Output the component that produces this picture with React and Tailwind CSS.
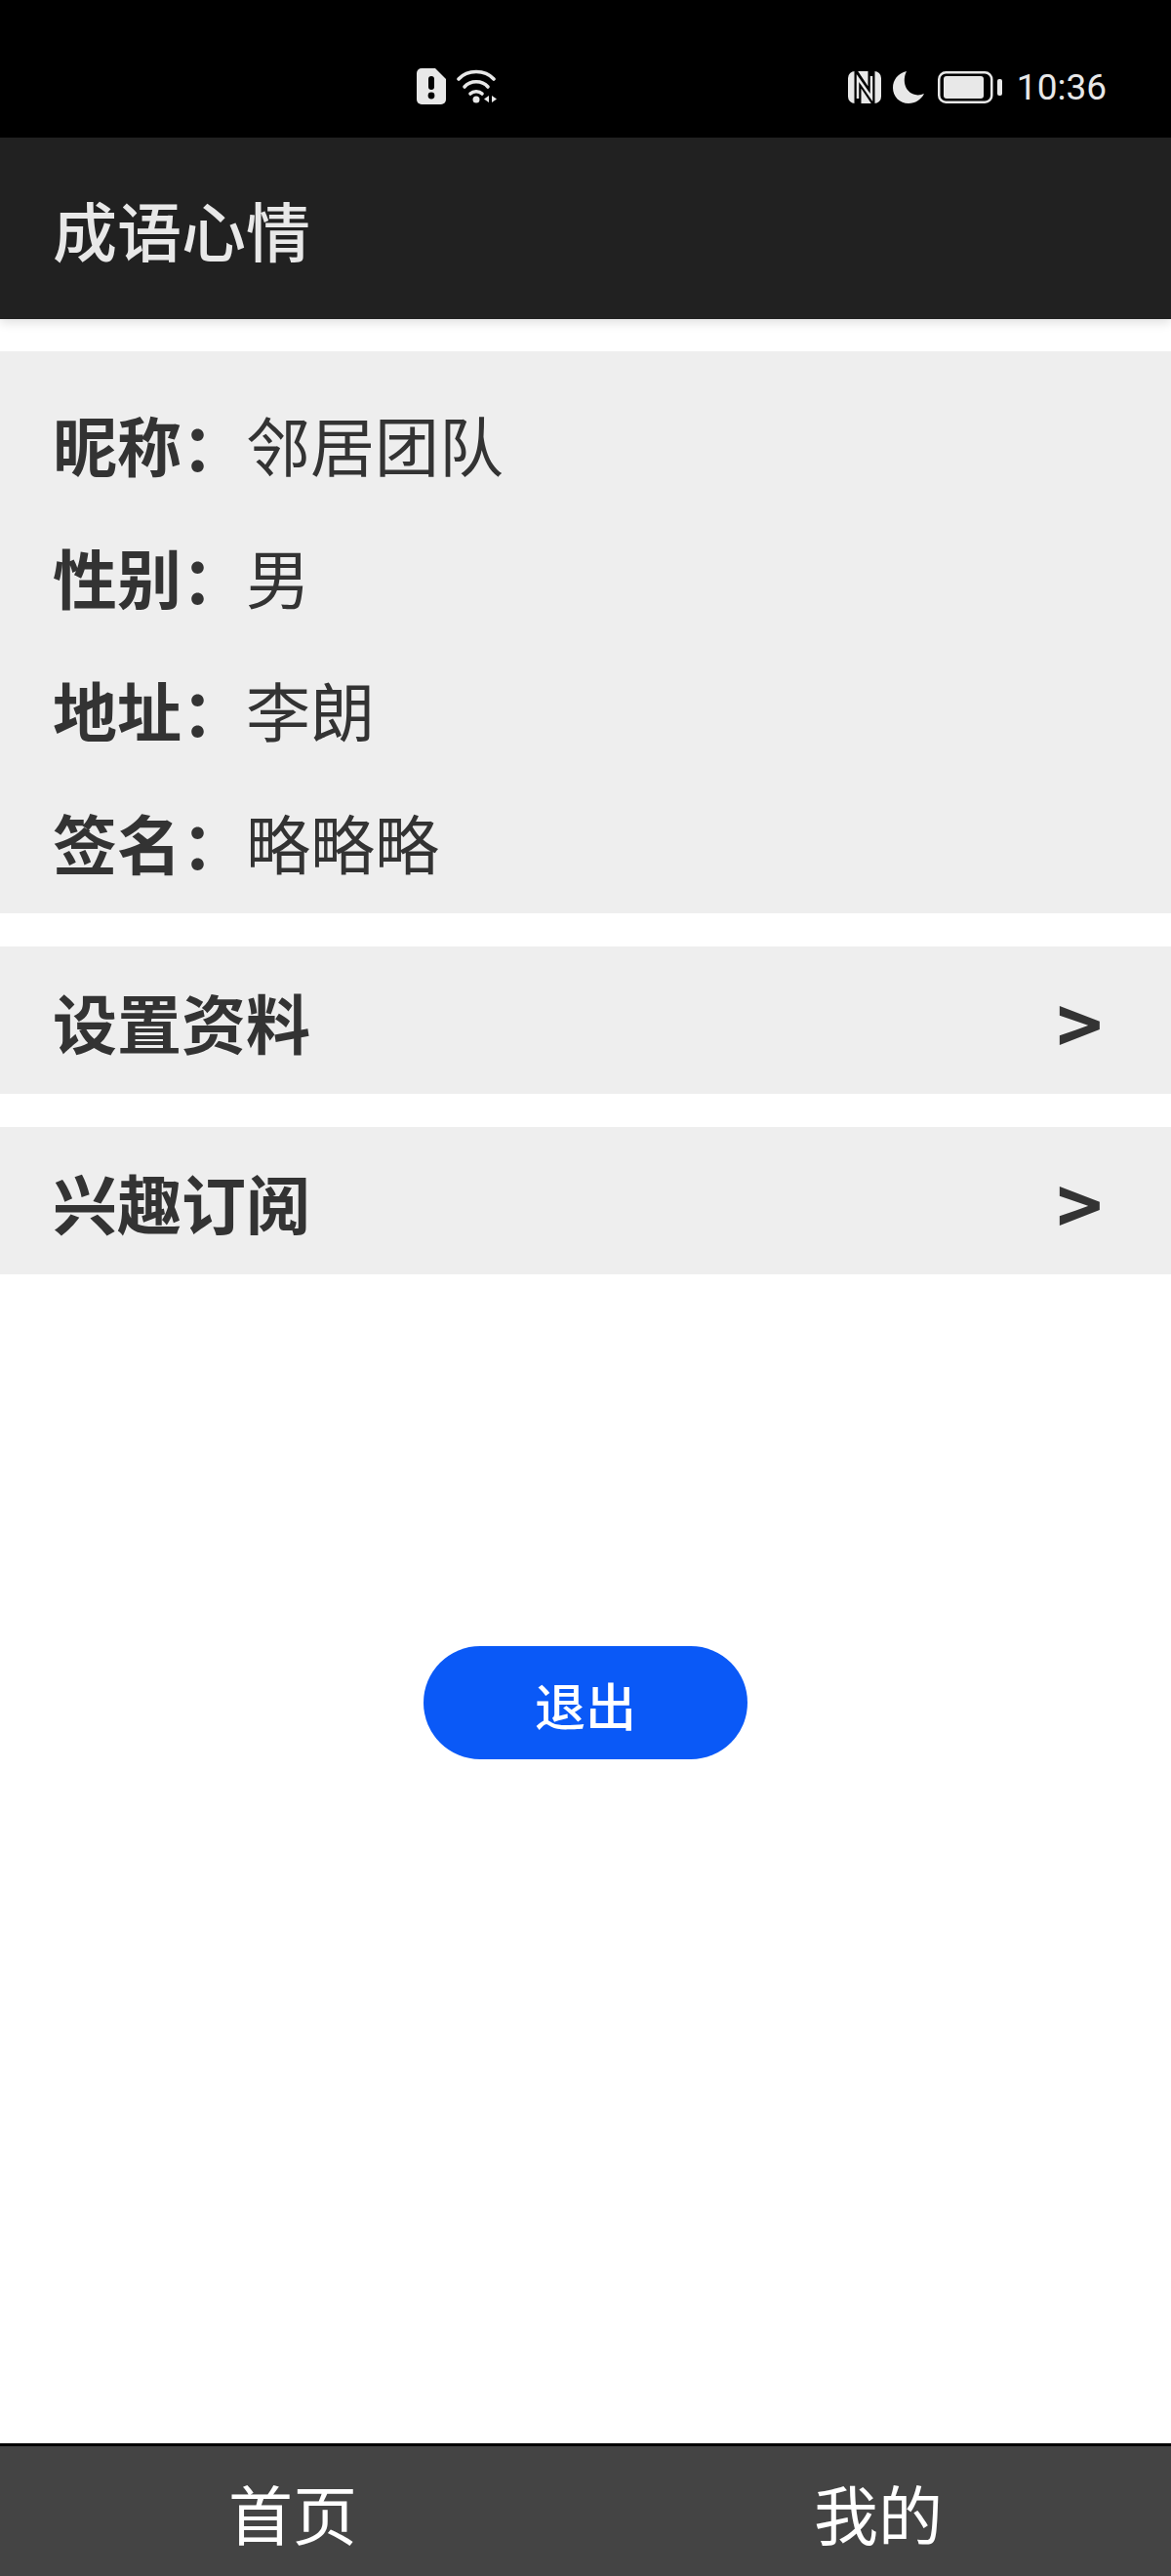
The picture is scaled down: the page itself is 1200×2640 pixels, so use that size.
const PROFILE = [
  { label: "昵称：", value: "邻居团队" },
  { label: "性别：", value: "男" },
  { label: "地址：", value: "李朗" },
  { label: "签名：", value: "略略略" },
];

function SimAlert() {
  return (
    <svg width="30" height="37" viewBox="0 0 30 37">
      <path d="M5 0h14l11 11v21a5 5 0 0 1-5 5H5a5 5 0 0 1-5-5V5a5 5 0 0 1 5-5z" fill="#e8e8e8" />
      <rect x="12" y="8" width="6" height="14" rx="3" fill="#000" />
      <circle cx="15" cy="28" r="3.4" fill="#000" />
    </svg>
  );
}

function Wifi() {
  return (
    <svg width="42" height="36" viewBox="0 0 42 36" fill="none" stroke="#e8e8e8" strokeWidth="3.6" strokeLinecap="round">
      <path d="M2 10C11 0 29 0 38 10" />
      <path d="M8 18C14 11 26 11 32 18" />
      <path d="M14 25c3-3 9-3 12 0" />
      <circle cx="20" cy="31" r="3.5" fill="#e8e8e8" stroke="none" />
      <path d="M33 27v7l-5-3.500zM36 27v7l5-3.500z" fill="#e8e8e8" stroke="none" />
    </svg>
  );
}

function Nfc() {
  return (
    <svg width="34" height="33" viewBox="0 0 34 33">
      <rect width="34" height="33" rx="7" fill="#e8e8e8" />
      <path d="M10 33V6l14 21V0" fill="none" stroke="#000" strokeWidth="7" />
      <path d="M10 28V7l14 20V5" fill="none" stroke="#e8e8e8" strokeWidth="2.500" />
    </svg>
  );
}

function Moon() {
  return (
    <svg width="32" height="33" viewBox="0 0 32 33">
      <path d="M14 0C5 2 0 9 0 17c0 9 7 16 16 16 7 0 13-4 16-10-3 1-6 2-9 1C13 22 9 10 14 0z" fill="#e8e8e8" />
    </svg>
  );
}

function Battery() {
  return (
    <svg width="66" height="33" viewBox="0 0 66 33">
      <rect x="1.250" y="1.250" width="54" height="30.500" rx="7" fill="none" stroke="#e8e8e8" strokeWidth="2.500" />
      <rect x="6" y="5" width="41" height="23" rx="3" fill="#e8e8e8" />
      <rect x="61" y="8" width="5" height="17" rx="2" fill="#e8e8e8" />
    </svg>
  );
}

function MenuRow({ label }) {
  return (
    <div className="flex h-[151px] items-center justify-between bg-[#eeeeee] pl-[54px] pr-[70px] text-[#333333]">
      <span className="text-[66px] font-bold leading-none">{label}</span>
      <span className="text-[80px] font-bold leading-none">&gt;</span>
    </div>
  );
}

export default function App() {
  return (
    <div lang="zh-CN" className="flex h-[2640px] w-[1200px] flex-col bg-white font-['Noto_Sans_CJK_SC',sans-serif]">
      <div className="flex h-[141px] items-start bg-black pt-[70px] text-[#e8e8e8]">
        <div className="ml-[427px] flex items-center gap-[11px]">
          <SimAlert />
          <Wifi />
        </div>
        <div className="ml-auto mr-[66px] flex items-center">
          <Nfc />
          <div className="ml-[12px]">
            <Moon />
          </div>
          <div className="ml-[14px]">
            <Battery />
          </div>
          <span className="ml-[15px] pt-[2px] font-['Roboto',sans-serif] text-[37px] font-normal leading-[36px]">10:36</span>
        </div>
      </div>
      <div className="flex h-[186px] items-center bg-[#212121] pl-[54px] shadow-[0_4px_10px_rgba(0,0,0,0.12)]">
        <span className="text-[66px] font-medium leading-none text-[#e8e8e8]">成语心情</span>
      </div>
      <div className="mt-[33px] flex h-[576px] flex-col justify-center gap-[68px] bg-[#eeeeee] pl-[54px] pt-[20px] text-[#333333]">
        {PROFILE.map((row) => (
          <div key={row.label} className="flex items-center text-[66px] leading-[68px]">
            <span className="font-bold">{row.label}</span>
            <span className="font-normal">{row.value}</span>
          </div>
        ))}
      </div>
      <div className="mt-[34px] flex flex-col gap-[34px]">
        <MenuRow label="设置资料" />
        <MenuRow label="兴趣订阅" />
      </div>
      <div className="flex flex-1 items-start justify-center pt-[381px]">
        <button className="flex h-[116px] w-[332px] items-center justify-center rounded-full bg-[#0a59f7] pt-[4px] text-[52px] font-medium leading-none text-white">
          退出
        </button>
      </div>
      <div className="flex h-[136px] items-center border-t-[3px] border-black bg-[#444444] text-[66px] leading-none text-white">
        <div className="flex-1 text-center">首页</div>
        <div className="flex-1 text-center">我的</div>
      </div>
    </div>
  );
}
